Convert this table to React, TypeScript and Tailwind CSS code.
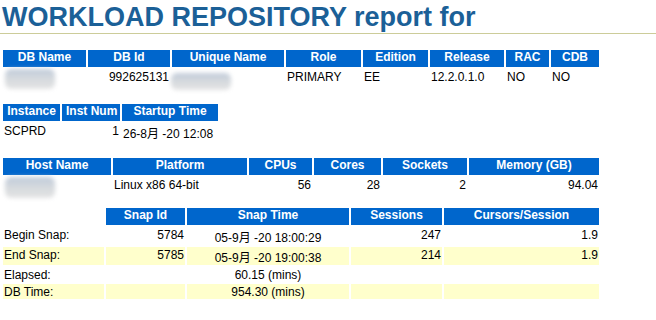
import React from "react";

type Align = "l" | "r" | "c";

function Th({ children }: { children?: React.ReactNode }) {
  return (
    <div className="bg-[#0066cc] text-white font-bold text-center px-[4px] pb-[3px] leading-[normal] whitespace-nowrap">
      {children}
    </div>
  );
}

function Td({
  children,
  align = "l",
  y = false,
  blob,
}: {
  children?: React.ReactNode;
  align?: Align;
  y?: boolean;
  blob?: React.ReactNode;
}) {
  const a = align === "r" ? "text-right" : align === "c" ? "text-center" : "text-left";
  const bg = y ? "bg-[#ffffcc]" : "bg-white";
  return (
    <div className={`relative px-px pt-px leading-[normal] whitespace-nowrap text-black ${a} ${bg}`}>
      {children}
      {blob}
    </div>
  );
}

function Blob({ cls }: { cls: string }) {
  return (
    <div className={`absolute pointer-events-none ${cls}`}>
      <div className="w-full h-full rounded-[6px] bg-gradient-to-b from-[#c0cbda] via-[#d6dade] to-[#e4e4e4] blur-[2px]" />
    </div>
  );
}

export default function App() {
  return (
    <div className="bg-white w-[656px] h-[320px] overflow-hidden font-['Liberation_Sans','Noto_Sans_CJK_SC',Arial,sans-serif] text-[12px]">
      <h1 className="pl-[2px] pt-[2px] text-[27px] font-bold leading-[normal] text-[#1b6097] border-b border-[#cccc99] whitespace-nowrap">
        WORKLOAD REPOSITORY report for
      </h1>

      <div className="pl-px mt-[14px]">
        <div className="grid grid-cols-[83px_82px_112px_75px_65px_74px_43px_48px] gap-[2px] p-[2px] w-fit">
          <Th>DB Name</Th>
          <Th>DB Id</Th>
          <Th>Unique Name</Th>
          <Th>Role</Th>
          <Th>Edition</Th>
          <Th>Release</Th>
          <Th>RAC</Th>
          <Th>CDB</Th>
          <Td blob={<Blob cls="left-[2px] top-0 w-[50px] h-[20px]" />}></Td>
          <Td align="r">992625131</Td>
          <Td blob={<Blob cls="left-[-1px] top-[4px] w-[60px] h-[17px]" />}></Td>
          <Td>PRIMARY</Td>
          <Td>EE</Td>
          <Td>12.2.0.1.0</Td>
          <Td>NO</Td>
          <Td>NO</Td>
        </div>
      </div>

      <div className="pl-px mt-[16px]">
        <div className="grid grid-cols-[57px_58px_96px] gap-[2px] p-[2px] w-fit">
          <Th>Instance</Th>
          <Th>Inst Num</Th>
          <Th>Startup Time</Th>
          <Td>SCPRD</Td>
          <Td align="r">1</Td>
          <Td>26-8月 -20 12:08</Td>
        </div>
      </div>

      <div className="pl-px mt-[13px]">
        <div className="grid grid-cols-[108px_134px_63px_67px_84px_130px] gap-[2px] p-[2px] w-fit">
          <Th>Host Name</Th>
          <Th>Platform</Th>
          <Th>CPUs</Th>
          <Th>Cores</Th>
          <Th>Sockets</Th>
          <Th>Memory (GB)</Th>
          <Td blob={<Blob cls="left-[2px] top-0 w-[50px] h-[21px]" />}></Td>
          <Td>Linux x86 64-bit</Td>
          <Td align="r">56</Td>
          <Td align="r">28</Td>
          <Td align="r">2</Td>
          <Td align="r">94.04</Td>
        </div>
      </div>

      <div className="pl-px mt-[12px]">
        <div className="grid grid-cols-[101px_79px_162px_91px_155px] gap-[2px] p-[2px] w-fit">
          <div className="bg-white" />
          <Th>Snap Id</Th>
          <Th>Snap Time</Th>
          <Th>Sessions</Th>
          <Th>Cursors/Session</Th>

          <Td>Begin Snap:</Td>
          <Td align="r">5784</Td>
          <Td align="c">05-9月 -20 18:00:29</Td>
          <Td align="r">247</Td>
          <Td align="r">1.9</Td>

          <Td y>End Snap:</Td>
          <Td y align="r">5785</Td>
          <Td y align="c">05-9月 -20 19:00:38</Td>
          <Td y align="r">214</Td>
          <Td y align="r">1.9</Td>

          <Td>Elapsed:</Td>
          <Td></Td>
          <Td align="c">60.15 (mins)</Td>
          <Td></Td>
          <Td></Td>

          <Td y>DB Time:</Td>
          <Td y></Td>
          <Td y align="c">954.30 (mins)</Td>
          <Td y></Td>
          <Td y></Td>
        </div>
      </div>
    </div>
  );
}
